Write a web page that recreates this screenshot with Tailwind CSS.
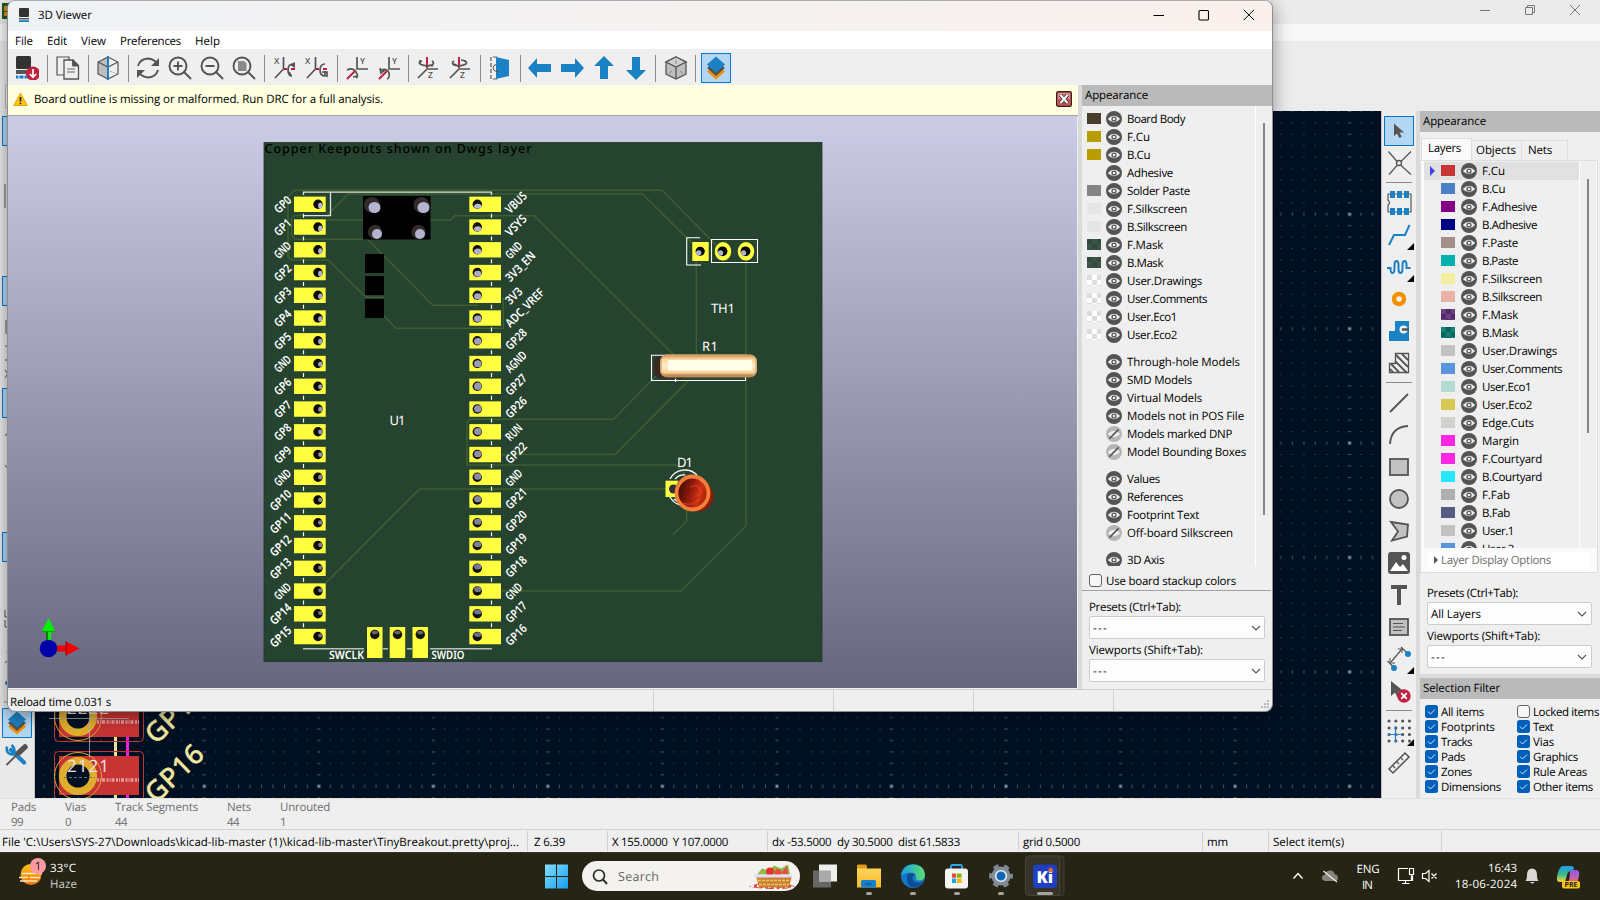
<!DOCTYPE html>
<html lang="en">
<head>
<meta charset="utf-8">
<title>3D Viewer</title>
<script src="https://cdn.jsdelivr.net/npm/@tailwindcss/browser@4"></script>
</head>
<body class="w-[1600px] h-[900px] overflow-hidden relative bg-[#efefef] font-['Open_Sans','Noto_Sans',sans-serif] text-[11.5px] leading-[18px] text-black [text-rendering:geometricPrecision] [&_[data-w]]:inline-block [&_[data-w]]:whitespace-pre [&_[data-w]]:translate-y-px">
<svg class="absolute w-0 h-0">
  <defs>
    <symbol id="eye" viewBox="0 0 16 16"><circle cx="8" cy="8" r="8" fill="#545454"/><path d="M1.800 8Q8 1.600 14.200 8Q8 14.400 1.800 8Z" fill="#efefef"/><circle cx="8" cy="8" r="2.600" fill="#545454"/><circle cx="8" cy="8" r="1.300" fill="#efefef"/></symbol>
    <symbol id="noeye" viewBox="0 0 16 16"><circle cx="8" cy="8" r="8" fill="#b6b6b6"/><path d="M1.800 8Q8 1.600 14.200 8Q8 14.400 1.800 8Z" fill="#efefef"/><path d="M3.400 12.600L12.600 3.400" stroke="#545454" stroke-width="1.500"/></symbol>
    <symbol id="chev" viewBox="0 0 10 6"><path d="M1 1L5 5L9 1" fill="none" stroke="#555" stroke-width="1.100"/></symbol>
    <symbol id="stack" viewBox="0 0 24 24"><path d="M12 8L21 15.500L12 23.500L3 15.500Z" fill="#f29100"/><path d="M12 4L21 12L12 20L3 12Z" fill="#545454"/><path d="M12 .5L21 8.500L12 16.500L3 8.500Z" fill="#1a81c4"/></symbol>
  </defs>
</svg>

<div class="flex flex-col w-[1600px] h-[900px]">
  <!-- editor title bar -->
  <header class="h-[24px] bg-[#ebebeb] flex items-center justify-end pr-[19px] gap-[33px] pb-[4px] shrink-0">
    <svg class="w-3 h-3" viewBox="0 0 12 12"><path d="M1 6.500H11" stroke="#777"/></svg>
    <svg class="w-3 h-3" viewBox="0 0 12 12"><path d="M1.500 3.500h7v7h-7zM3.500 3V1.500h7v7H9" fill="none" stroke="#777"/></svg>
    <svg class="w-3 h-3" viewBox="0 0 12 12"><path d="M1 1L11 11M11 1L1 11" stroke="#777"/></svg>
  </header>
  <div class="h-[17px] bg-[#f8f8f8] shrink-0"></div>
  <div class="h-[70px] bg-[#ececec] shrink-0"></div>

  <div class="flex h-[687px] shrink-0">
    <aside class="w-[35px] bg-[#e9e9e9] shrink-0 border-r border-[#c4c4c4]">
      <svg class="w-[34px] h-[687px]" viewBox="0 111 34 687">
        <g fill="#b3d7f2" stroke="#0078d4"><path d="M2.500 116.500h29v29h-29zM2.500 276.500h29v29h-29zM2.500 388.500h29v29h-29zM2.500 532.500h29v29h-29zM2.500 708.500h29v29h-29z"/></g>
        <g stroke="#545454" fill="none"><path d="M5 184v24M6 320v14M5 346h4M5 360h4M5 370l4 6M5 378l4-6M5 436l4-5M5 465l4 5M5 610v7h4M5 620v7h4M5 663l4-4"/></g>
        <path d="M4 702H30" stroke="#888"/>
        <circle cx="8" cy="652" r="1.500" fill="#f29100"/><circle cx="7" cy="683" r="2" fill="#1a81c4"/>
        <svg x="5" y="711" width="24" height="24"><use href="#stack"/></svg>
        <path d="M11 750L24 762.500" stroke="#1a81c4" stroke-width="4.200" stroke-linecap="round"/><path d="M7 746.500q-1 5 2 7t6-.5M14 752.500q1.500-4-2.500-7.500" stroke="#1a81c4" stroke-width="2.600" fill="none"/>
        <path d="M6.500 765L18 753.500" stroke="#545454" stroke-width="1.800"/><path d="M18.500 753L25 747" stroke="#545454" stroke-width="5.500" stroke-linecap="round"/>
      </svg>
    </aside>

    <!-- board canvas of the editor -->
    <svg class="w-[1346px] h-[687px] shrink-0 bg-[#001023]" viewBox="35 111 1346 687">
      <defs>
        <pattern id="grid" patternUnits="userSpaceOnUse" x="198.300" y="208.300" width="114.530" height="114.400">
          <g id="gridcells"></g>
        </pattern>
      </defs>
      <rect x="35" y="111" width="1346" height="687" fill="url(#grid)"/>
      <path d="M114 700h3v98h-3z" fill="#e8e29a"/><path d="M126 700h3v98h-3z" fill="#f01fe0"/>
      <g fill="#c83434"><path d="M59 700h80v37h-80zM59 756h80v39h-80z"/></g>
      <g fill="none" stroke="#c83434"><rect x="54.500" y="690" width="89" height="51.500" rx="4"/><rect x="54.500" y="751.500" width="89" height="60" rx="4"/></g>
      <g fill="#001023" stroke="#e0ae2c" stroke-width="7.500"><circle cx="78" cy="717" r="15.300"/><circle cx="78" cy="776" r="15.300"/></g>
      <g fill="none" stroke="#d9a62b"><circle cx="78" cy="717" r="23.500"/><circle cx="78" cy="776" r="23.500"/></g>
      <path d="M49 718.500H129M89.500 712V757" stroke="#aeb3ba" stroke-width=".8"/>
      <path d="M64 777.500H95" stroke="#66717c" stroke-dasharray="3 2"/>
      <g font-family="Noto Sans" fill="#f1dfe0" font-size="17"><text x="67" y="714" textLength="42">2222</text><text x="67" y="772" textLength="42">2121</text></g>
      <path d="M97 722h42M97 780h42" stroke="#e59a9a" stroke-width="3.500" stroke-dasharray="2 1 1 1 3 1.500"/>
      <g font-family="Noto Sans" fill="#f0e7a0" stroke="#f0e7a0" stroke-width=".7" font-size="27"><text transform="translate(156 804) rotate(-44)" textLength="69">GP16</text><text transform="translate(156 745) rotate(-44)" textLength="69">GP17</text></g>
    </svg>

    <!-- right toolbar -->
    <aside class="w-[35px] shrink-0 bg-[#efefef] border-l border-[#bbb]">
      <svg class="w-[34px] h-[687px]" viewBox="1382 111 34 687" fill="none" stroke="#545454" stroke-width="1.800">
        <rect x="1384.500" y="116.500" width="29" height="29" fill="#b3d7f2" stroke="#0078d4" stroke-width="1"/>
        <path d="M1394 123.500V136l3-2.500 2.500 4.500 2.200-1.200L1399.500 132.500h4.500Z" fill="#545454" stroke="none"/>
        <path d="M1388.500 151.500L1397 161.500M1411 151.500L1401 161.500M1389 174.500L1397.500 165M1411 174.500L1400.500 165" stroke-width="1.200"/><circle cx="1399" cy="163" r="2.500" stroke-width="1.300"/>
        <path d="M1386 182.500H1412M1386 382.500H1412M1386 710.500H1412" stroke="#8a8a8a" stroke-width="1"/>
        <path d="M1388 194H1411V212H1388V205q3-2 0-5Z" stroke-width="1.200"/>
        <path d="M1390 191h5v7h-5zM1397 191h5v7h-5zM1404 191h5v7h-5zM1390 208h5v7h-5zM1397 208h5v7h-5zM1404 208h5v7h-5z" fill="#1a81c4" stroke="none"/>
        <path d="M1389 245l5-10h11l4.500-10" stroke="#1a81c4" stroke-width="2"/>
        <path d="M1387 268h3.500q0 5 2 5t2-5v-3q0-4 2-4t2 4v4q0 4 2 4t2-4v-4q0-4 2-4t2 4v3h4" stroke="#1a81c4" stroke-width="2"/>
        <path d="M1414 243v7h-7zM1414 275v7h-7zM1414 667v7h-7zM1414 739v7h-7z" fill="#000" stroke="none"/>
        <circle cx="1399" cy="299" r="5" stroke="#f29100" stroke-width="4.500"/>
        <path d="M1395 321h14v20h-20v-10h6z" fill="#1a81c4" stroke="none"/><circle cx="1403.500" cy="329.500" r="4" fill="#efefef" stroke="none"/><path d="M1402 329.500H1409" stroke-width="2.500"/>
        <path d="M1395.500 353.500h13v19h-19v-9h6z" stroke-width="1.300"/><path d="M1396 355l12 12M1402 354l6 6M1395 361l12 12M1391 364l8 8M1390 369l3 3" stroke-width="1.800"/>
        <path d="M1390 412L1408 394"/><path d="M1390 444Q1391 427 1408 426"/>
        <g fill="#c2c2c2"><rect x="1390" y="459" width="18" height="16"/><circle cx="1399" cy="499" r="9"/><path d="M1391 522l17 2.500-1 12-15 4 6-9z"/><rect x="1390" y="619" width="18" height="16"/></g>
        <path d="M1393 623.500h10M1393 627h12M1393 630.500h9" stroke-width="1"/>
        <rect x="1388" y="552" width="22" height="22" rx="3" fill="#545454" stroke="none"/><path d="M1390 571l6-9 4 5 3-3 5 7zM1404 555a2.500 2.500 0 110 5 2.500 2.500 0 010-5z" fill="#fff" stroke="none"/>
        <path d="M1391 587H1407M1399 586V605" stroke-width="4"/>
        <path d="M1391 662l11-13M1387.500 661l6 6M1401 647l6 6" stroke-width="1.200"/><path d="M1390 658v5h5M1398 649h4v4" stroke-width="1"/><g fill="#1a81c4" stroke="none"><circle cx="1408" cy="654" r="3"/><circle cx="1394" cy="668" r="3"/></g>
        <path d="M1391 681v15l4-3.500 2.500 5 3-1.500-2.500-4.500h6z" fill="#545454" stroke="none"/><circle cx="1404" cy="696" r="6.700" fill="#c1203f" stroke="none"/><path d="M1401.200 693.200l5.600 5.600M1406.800 693.200l-5.600 5.600" stroke="#fff" stroke-width="1.800"/>
        <path d="M1389 721H1412M1389 728H1412M1389 734.500H1412M1389 741H1412" stroke-width="3" stroke-linecap="round" stroke-dasharray="0.100 6.700"/><path d="M1388 734.500h14M1395.500 726v16" stroke="#1a81c4" stroke-width="1.200"/>
        <path d="M1389 769l16-16 4 4-16 16z" stroke-width="1.500"/><path d="M1393 766l2 2M1397 762l2 2M1401 758l2 2" stroke-width="1.200"/>
      </svg>
    </aside>
    <div class="w-[4px] bg-[#dadada] shrink-0"></div>

    <!-- layers panel -->
    <section class="w-[180px] shrink-0 flex flex-col">
      <div class="h-[21px] bg-[#bababa] pl-[3px] leading-[20px] shrink-0"><span data-w="63">Appearance</span></div>
      <div class="h-[28px] pl-px flex items-end shrink-0 leading-[17px]">
        <div class="w-[51px] h-[22px] bg-[#fafafa] border border-b-0 border-[#ddd] pl-[6px]"><span data-w="33">Layers</span></div>
        <div class="w-[50px] h-[20px] border border-b-0 border-l-0 border-[#ddd] pl-[4px]"><span data-w="40">Objects</span></div>
        <div class="w-[46px] h-[20px] border border-b-0 border-l-0 border-[#ddd] pl-[6px]"><span data-w="24">Nets</span></div>
      </div>
      <div class="h-[413px] w-[178px] border border-[#ddd] shrink-0 bg-[#fafafa] pl-[3px] flex flex-col">
        <div class="h-[387px] w-[172px] pt-px overflow-hidden bg-[#efefef] flex">
          <div id="layers" class="w-[156px] border-r border-white"></div>
          <div class="w-[2px] h-[254px] bg-[#858585] mt-[17px] ml-[7px]"></div>
        </div>
        <div class="h-[18px] mt-[4px] ml-[4px] w-[163px] bg-white text-[#6d6d6d] flex items-center gap-[3px] pl-[6px] pb-[2px]">
          <svg class="w-[4px] h-[8px]" viewBox="0 0 4 8"><path d="M0 0L4 4L0 8Z" fill="#555"/></svg><span data-w="110">Layer Display Options</span>
        </div>
      </div>
      <div class="pl-[7px] pt-[11px] shrink-0 h-[101px]">
        <div class="h-[18px]"><span data-w="91">Presets (Ctrl+Tab):</span></div>
        <div class="w-[165px] h-[23px] border border-[#ccc] rounded-[2px] bg-[#fdfdfd] flex items-center justify-between px-[3px]"><span data-w="50">All Layers</span><svg class="w-[10px] h-[6px] mr-px"><use href="#chev"/></svg></div>
        <div class="h-[20px] pt-[2px]"><span data-w="113">Viewports (Shift+Tab):</span></div>
        <div class="w-[165px] h-[23px] border border-[#ccc] rounded-[2px] bg-[#fdfdfd] flex items-center justify-between px-[3px]"><span data-w="15">---</span><svg class="w-[10px] h-[6px] mr-px"><use href="#chev"/></svg></div>
      </div>
      <div class="h-[4px] bg-[#dadada] shrink-0"></div>
      <div class="h-[21px] bg-[#bababa] pl-[3px] leading-[20px] shrink-0"><span data-w="77">Selection Filter</span></div>
      <div id="filters" class="grid grid-cols-[92px_88px] pl-[5px] pt-[5px]"></div>
    </section>
  </div>

  <!-- editor message panel -->
  <div class="h-[31px] shrink-0 flex text-[#6e6e6e] pl-[11px] leading-[15px] border-t border-[#e2e2e2]">
    <div class="w-[54px]"><span data-w="25">Pads</span><br><span data-w="12">99</span></div>
    <div class="w-[50px]"><span data-w="21">Vias</span><br><span data-w="6">0</span></div>
    <div class="w-[112px]"><span data-w="83">Track Segments</span><br><span data-w="12">44</span></div>
    <div class="w-[53px]"><span data-w="24">Nets</span><br><span data-w="12">44</span></div>
    <div><span data-w="50">Unrouted</span><br><span data-w="6">1</span></div>
  </div>
  <div class="h-[23px] shrink-0 border-t border-[#d4d4d4] flex items-center leading-[21px]">
    <div class="w-[528px] h-[20px] pl-[2px] border-r border-[#d0d0d0]"><span data-w="517">File 'C:\Users\SYS-27\Downloads\kicad-lib-master (1)\kicad-lib-master\TinyBreakout.pretty\proj...</span></div>
    <div class="w-[80px] h-[20px] pl-[6px] border-r border-[#d0d0d0]"><span data-w="31">Z 6.39</span></div>
    <div class="w-[160px] h-[20px] pl-[4px] border-r border-[#d0d0d0] whitespace-pre"><span data-w="116">X 155.0000  Y 107.0000</span></div>
    <div class="w-[251px] h-[20px] pl-[4px] border-r border-[#d0d0d0] whitespace-pre"><span data-w="188">dx -53.5000  dy 30.5000  dist 61.5833</span></div>
    <div class="w-[184px] h-[20px] pl-[4px] border-r border-[#d0d0d0]"><span data-w="57">grid 0.5000</span></div>
    <div class="w-[66px] h-[20px] pl-[4px] border-r border-[#d0d0d0]"><span data-w="21">mm</span></div>
    <div class="w-[173px] h-[20px] pl-[4px] border-r border-[#d0d0d0]"><span data-w="71">Select item(s)</span></div>
  </div>

  <!-- taskbar -->
  <footer class="h-[48px] shrink-0 bg-[#262415] border-t border-[#3a382b] relative text-white">
    <svg class="w-[1600px] h-[47px]" viewBox="0 853 1600 47" font-family="Open Sans, Noto Sans, sans-serif" font-size="11.500">
      <defs>
        <linearGradient id="sun" x1="0" y1="0" x2="0" y2="1"><stop offset="0" stop-color="#ffc21a"/><stop offset="1" stop-color="#ee7212"/></linearGradient>
        <linearGradient id="win" x1="0" y1="0" x2="1" y2="1"><stop offset="0" stop-color="#83e0ff"/><stop offset="1" stop-color="#169bf2"/></linearGradient>
        <linearGradient id="fold" x1="0" y1="0" x2="0" y2="1"><stop offset="0" stop-color="#ffd95e"/><stop offset="1" stop-color="#f9b92d"/></linearGradient>
        <linearGradient id="edge" x1="0" y1="0" x2="1" y2="0"><stop offset="0" stop-color="#1c9de0"/><stop offset="1" stop-color="#5be070"/></linearGradient>
        <linearGradient id="cp" x1="0" y1="0" x2="0" y2="1"><stop offset="0" stop-color="#1e9cf0"/><stop offset=".5" stop-color="#35b98c"/><stop offset="1" stop-color="#f3d23a"/></linearGradient>
        <linearGradient id="cp2" x1="0" y1="0" x2="0" y2="1"><stop offset="0" stop-color="#8a5cf0"/><stop offset="1" stop-color="#f0657c"/></linearGradient>
      </defs>
      <circle cx="31" cy="874.500" r="10.500" fill="url(#sun)"/><path d="M22 873.500h14M38 873.500h4M19 877.500h9M30 877.500h10M20 881h17" stroke="#ffe9c0" stroke-width="1.500"/>
      <circle cx="38" cy="866" r="8" fill="#fb9aa3"/><text x="38" y="870" fill="#222" text-anchor="middle">1</text>
      <text x="50" y="872" fill="#fff" textLength="26">33°C</text><text x="50" y="888" fill="#ccc" textLength="27">Haze</text>
      <g transform="translate(0 -3.500)">
        <path d="M545 868h11v11.500h-11zM557 868h11v11.500h-11zM545 880.500h11v11.500h-11zM557 880.500h11v11.500h-11z" fill="url(#win)"/>
        <rect x="582" y="864.500" width="218" height="30" rx="15" fill="#f3f2ee"/>
        <circle cx="599" cy="879" r="5.500" fill="none" stroke="#2c2c2c" stroke-width="1.700"/><path d="M603 883l4 4.500" stroke="#2c2c2c" stroke-width="1.900"/>
        <text x="618" y="884" fill="#666" font-size="12.500" textLength="41">Search</text>
        <path d="M749 890q23-9 46 0q-8 3-23 2.500t-23-2.500z" fill="#e33b44"/><path d="M751 890l6-1 6 3 8-2 8 3 8-3 6 1" stroke="#fff" stroke-width="2" fill="none" stroke-dasharray="3 3"/><path d="M756 879h36l-3 12h-30z" fill="#c88236"/><path d="M758 884h32M759 888h30" stroke="#f2c25e" stroke-width="1.500" stroke-dasharray="3 1"/><path d="M757 878l5-6 7 2 5-5 7 3 7-4 2 10z" fill="#8cbd45"/><circle cx="770" cy="875" r="4" fill="#e2312d"/><circle cx="778" cy="876" r="3.500" fill="#ef4a43"/><path d="M781 877l6-8 1 9z" fill="#e54c4a"/><rect x="754" y="878" width="38" height="3" rx="1" fill="#e6dced"/>
        <rect x="813" y="874" width="18" height="17" fill="#666"/><rect x="819" y="868" width="18" height="17" fill="#efefef"/><rect x="819" y="874" width="12" height="11" fill="#aaa"/>
        <path d="M857 869h8l2 3h14v19h-24z" fill="url(#fold)"/><path d="M857 869.500q0-1.500 1.500-1.500h6.500q2 0 2 2v2h-10z" fill="#e09b1b"/><rect x="861" y="883.500" width="15" height="7.500" rx="1.500" fill="#1480cf"/><path d="M865 887.500h7" stroke="#0b5c9f" stroke-width="1.500"/>
        <circle cx="913" cy="879.500" r="12" fill="#1677c8"/><path d="M901 879q2-11 12-11q11 0 12 10q0 6-6 6q-4 0-3-3q0-5-5-5q-6 0-10 3z" fill="url(#edge)"/><path d="M907 879q3-4 8-1q-4 2-2 6q4 4 10 1q-3 6-10 6q-7-1-6-12z" fill="#0d4d96"/>
        <path d="M951 873v-3q0-1.500 1.500-1.500h8q1.500 0 1.500 1.500v3" fill="none" stroke="#2baaf0" stroke-width="1.800"/><rect x="945" y="872" width="23" height="20" rx="3" fill="#f4f4f4"/><path d="M952 877h4.200v4.200H952z" fill="#ef4b22"/><path d="M957 877h4.500v4.200H957z" fill="#7db700"/><path d="M952 882h4.200v4.500H952z" fill="#1ba3ea"/><path d="M957 882h4.500v4.500H957z" fill="#fdb600"/>
        <circle cx="1001" cy="879.500" r="10.200" fill="none" stroke="#7e8690" stroke-width="3.500" stroke-dasharray="5.300 5.380" stroke-dashoffset="2.600"/><circle cx="1001" cy="879.500" r="9.500" fill="#848c95"/><circle cx="1001" cy="879.500" r="5.300" fill="#1266b8" stroke="#e6eef5" stroke-width="1.600"/>
        <rect x="1030" y="859.500" width="34" height="39.500" rx="3" fill="#302e21" stroke="#403e33"/><rect x="1025.500" y="859.500" width="34" height="39.500" rx="3" fill="#353326" stroke="#45433a"/>
        <rect x="1033" y="868" width="24" height="23.500" rx="4" fill="#1f3fc0"/><text x="1036.500" y="886" fill="#fff" font-weight="800" font-size="16.500" textLength="16.500" lengthAdjust="spacingAndGlyphs">Ki</text><circle cx="1050.700" cy="873.500" r="2.200" fill="#f06a1d"/>
        <path d="M867.500 897h3M911.500 897h3M955.500 897h3M999.500 897h3M1038.500 897h13" stroke="#a5a49d" stroke-width="3" stroke-linecap="round"/>
      </g>
      <path d="M1293.500 878.500l4.500-5 4.500 5" fill="none" stroke="#fff" stroke-width="1.400"/>
      <path d="M1325 881q-3.500-.5-3-4 .5-2.500 3-2.500 1-4 5-4t5 4q3 0 3 3.500 0 3-3 3z" fill="#85847c"/><path d="M1323.500 871l13.500 11" stroke="#eee" stroke-width="1.300"/>
      <g fill="#fff"><text x="1356.500" y="873" textLength="23">ENG</text><text x="1362" y="889" textLength="11">IN</text><text x="1488" y="872" textLength="29">16:43</text><text x="1455" y="888" textLength="62">18-06-2024</text></g>
      <g fill="none" stroke="#fff" stroke-width="1.200"><path d="M1408 868.500h-9.500v12h14v-5M1402 883.500h7.500M1405.500 881v2.500M1409.500 868.500h4v6h-4zM1411.500 875v6"/><path d="M1422.500 873.500h3l3.500-3v11l-3.500-3h-3zM1431.500 873.500l5 5M1436.500 873.500l-5 5"/></g>
      <path d="M1525.500 881q1.500-1.500 1.500-6 0-6.500 5-6.500t5 6.500q0 4.500 1.500 6zM1530 882h4.500q-2 3-4.500 0z" fill="#d9d9d6"/>
      <path d="M1562 866h9q3 0 3 3l-3 2q-3 0-4 4l-2 7h-5q-4 0-3-5 1-8 5-11z" fill="url(#cp)"/><path d="M1570 870h7q3 1 2 6-1 7-4 7h-8q3-1 3-13z" fill="url(#cp2)"/>
      <rect x="1562" y="881" width="18" height="7.500" rx="2" fill="#f8c60b"/><text x="1564.500" y="887.300" font-size="7" font-weight="700" fill="#222" textLength="13">PRE</text>
    </svg>
  </footer>
</div>

<!-- corner of the editor icon left of the viewer -->
<svg class="absolute left-0 top-0 w-[9px] h-[120px]" viewBox="0 0 9 120"><rect x="2" y="3" width="7" height="16" fill="#1c5a22"/><path d="M4 6h3v5H4zM4 12h3v4H4z" fill="#e08b12"/><path d="M9 85H5.500v23H9" fill="#f5f5f5" stroke="#bbb"/></svg>

<!-- 3D viewer window -->
<div class="absolute left-[7px] top-0 w-[1266px] h-[712px] rounded-[8px] overflow-hidden bg-[#efefef] border border-[#8f8f8f] border-t-[#aaa] flex flex-col shadow-[0_4px_18px_rgba(0,0,0,.4)]">
  <div class="h-[30px] shrink-0 flex items-center pl-[10px] pb-[2px] bg-linear-to-r from-[#eff2f5] via-[#f5f2f1] to-[#faf0ec]">
    <svg class="w-[12px] h-[16px]" viewBox="0 0 12 16"><rect x="1" y="1" width="10" height="9" rx="1" fill="#333"/><path d="M1 11h10v1.500H1z" fill="#545454"/><path d="M1 13.200h10V15H1z" fill="#1a81c4"/></svg>
    <span class="ml-[8px]" data-w="54">3D Viewer</span>
    <div class="ml-auto flex items-center gap-[33px] pr-[17px]">
      <svg class="w-3 h-3" viewBox="0 0 12 12"><path d="M.5 6.500H11" stroke="#000"/></svg>
      <svg class="w-3 h-3" viewBox="0 0 12 12"><rect x="1" y="1.500" width="9.500" height="9.500" rx="1" fill="none" stroke="#000" stroke-width="1.100"/></svg>
      <svg class="w-3 h-3" viewBox="0 0 12 12"><path d="M.8.8L11 11M11 .8L.8 11" stroke="#000"/></svg>
    </div>
  </div>
  <nav class="h-[18px] shrink-0 bg-white flex pl-[7px] leading-[19px]">
    <div class="w-[32px]"><span data-w="18">File</span></div><div class="w-[34px]"><span data-w="20">Edit</span></div><div class="w-[39px]"><span data-w="25">View</span></div><div class="w-[75px]"><span data-w="61">Preferences</span></div><div><span data-w="25">Help</span></div>
  </nav>
  <div id="tools" class="h-[36px] shrink-0 flex items-center pl-[3px] pt-[2px] bg-[#efefef]"></div>

  <div class="flex h-[604px] shrink-0">
    <div class="w-[1070px] shrink-0 flex flex-col">
      <div class="h-[31px] bg-[#ffffe1] flex items-center pl-[5px] pr-[6px] pb-[2px] justify-between border-b border-[#a0a0a0] shrink-0">
        <div class="flex items-center gap-[6px]">
          <svg class="w-[15px] h-[15px] mt-px" viewBox="0 0 15 15"><path d="M7.500 1L14.300 13.500H.7Z" fill="#fcc419" stroke="#eda60d" stroke-width="1" stroke-linejoin="round"/><path d="M7.500 5v4.500M7.500 10.700v1.600" stroke="#222" stroke-width="1.700"/></svg>
          <span data-w="349">Board outline is missing or malformed. Run DRC for a full analysis.</span>
        </div>
        <svg class="w-4 h-4" viewBox="0 0 16 16"><rect x=".7" y=".7" width="14.600" height="14.600" rx="1.500" fill="#dd8d83" stroke="#4a1420" stroke-width="1.400"/><path d="M2 8h12v6H2z" fill="#c05a48"/><path d="M4.500 4l7 8M11.500 4l-7 8" stroke="#453040" stroke-width="4"/><path d="M4.500 4l7 8M11.500 4l-7 8" stroke="#fff" stroke-width="2"/></svg>
      </div>
      <svg id="scene" class="w-[1070px] h-[573px] shrink-0" viewBox="8 116 1070 573">
        <defs>
          <linearGradient id="bg" x1="0" y1="0" x2="0" y2="1"><stop offset="0" stop-color="#cccce6"/><stop offset="1" stop-color="#66667f"/></linearGradient>
          <linearGradient id="res" x1="0" y1="0" x2="0" y2="1"><stop offset="0" stop-color="#c98f58"/><stop offset=".22" stop-color="#ffd9a0"/><stop offset=".5" stop-color="#fff0cc"/><stop offset=".8" stop-color="#fcd096"/><stop offset="1" stop-color="#7e5127"/></linearGradient>
          <linearGradient id="led" x1="0" y1=".2" x2="1" y2=".5"><stop offset="0" stop-color="#2c0a04"/><stop offset=".45" stop-color="#8c1a0a"/><stop offset=".75" stop-color="#cf3012"/><stop offset="1" stop-color="#a32209"/></linearGradient>
        </defs>
        <rect x="8" y="116" width="1069" height="572" fill="url(#bg)"/>
        <rect x="264" y="142.500" width="558" height="519" fill="#264330" stroke="#1e3627" stroke-width=".8"/>
        <text x="264.500" y="153" font-family="Noto Sans" font-size="12.500" font-weight="500" fill="#000" textLength="267">Copper Keepouts shown on Dwgs layer</text>
        <g fill="none" stroke="#3e5f30" stroke-width="1.500">
          <path d="M384 297.300H366L328.300 260H292L288 257V197L294.500 190.300H662L716 245"/>
          <path d="M325.700 217L348 194H642.500L692 243"/>
          <path d="M384 316L396 328.300H503.300V297"/>
          <path d="M325.700 220H450.700L455 215.700H534.300L673 354"/>
          <path d="M303 215.500H295L291.500 219V235L295 239.300H367.700L432.700 305.300H477.700"/>
          <path d="M325.700 583L419.700 489H668"/>
          <path d="M688 477L676 465H467V422.700L470 419.300H613.500L657 375"/>
          <path d="M501 454.500H615L688 381"/>
          <path d="M501 591H681L746 526V260"/>
          <path d="M696.300 260V354M686.700 508V521L673 534.700"/>
        </g>
        <g fill="none" stroke="#fff" stroke-width="1.300">
          <path d="M303.500 195V192.200H491.500V195M330.500 192V215.700H303.500" stroke="#dfe3df"/>
          <path d="M303 648.800H364M383 648.800h5M407 648.800h5M430 648.800H492" stroke="#b9c1bb" stroke-width="1.600"/>
          <path d="M700 237.700H686.700V265H701M711.500 239.500H757.500V262.500H711.500ZM651.500 355.300H745.500V380.500H651.500ZM675.500 378v4" stroke-width="1.100"/>
          <path d="M670 479A17 17 0 0 1 697 475M670 497A17 17 0 0 0 680 505M675 479A12 12 0 0 1 685 475M674 499A12 12 0 0 0 680 502"/>
        </g>
        <rect x="363" y="196" width="67.500" height="43.500" fill="#000"/>
        <path d="M365 254h19v19h-19zM365 276h19v19h-19zM365 299h19v19h-19z" fill="#000"/>
        <g fill="#332c2a"><circle cx="372" cy="205" r="8"/><circle cx="421.500" cy="205" r="8"/><circle cx="375" cy="232" r="7.200"/><circle cx="418.500" cy="232" r="7.200"/></g>
        <g fill="#b4b4d0"><ellipse cx="374.500" cy="207.500" rx="6" ry="5.500"/><ellipse cx="423.500" cy="207.500" rx="6" ry="5.500"/><ellipse cx="377" cy="234" rx="5" ry="5"/><ellipse cx="420" cy="234" rx="5" ry="5"/></g>
        <g id="pads"></g>
        <g fill="#ffff40"><rect x="692.300" y="242" width="16.400" height="19"/><ellipse cx="723" cy="251.300" rx="8.200" ry="9.300"/><ellipse cx="746" cy="251.300" rx="8.200" ry="9.300"/></g>
        <g fill="#050505"><circle cx="700.200" cy="251.300" r="4.600"/><circle cx="722.500" cy="251.300" r="4.900"/><circle cx="745.500" cy="251.300" r="4.900"/></g>
        <g fill="#b0b0cc"><circle cx="698.700" cy="253" r="2.700"/><circle cx="720.500" cy="253" r="2.700"/><circle cx="743.500" cy="253" r="2.700"/></g>
        <rect x="654" y="356" width="34" height="22.500" rx="7" fill="#3a2a22"/>
        <rect x="660.300" y="354.500" width="96.500" height="22.800" rx="7" fill="url(#res)"/><rect x="668" y="360" width="84" height="10.500" rx="1.500" fill="#ffffea"/><rect x="661" y="355.500" width="95" height="21" rx="6" fill="none" stroke="#d9a066" stroke-opacity=".6" stroke-width="2"/>
        <rect x="665.500" y="480.700" width="13" height="16.300" fill="#ffff40"/><circle cx="673.500" cy="489" r="4.500" fill="#2f2f35"/>
        <circle cx="690" cy="489" r="14" fill="#1f1712"/><circle cx="698" cy="496" r="15.500" fill="#8f1c0a"/><ellipse cx="692.500" cy="493" rx="16" ry="16.500" fill="url(#led)" stroke="#f2803a" stroke-width="3.800"/><path d="M690 487q7-4 10 2t-5 7M683 503q9 4 18-5" fill="none" stroke="#e8552e" stroke-opacity=".45" stroke-width="1.500"/>
        <g font-family="Noto Sans" fill="#fff" font-size="13"><text x="389.500" y="425" textLength="16">U1</text><text x="711" y="313" textLength="24">TH1</text><text x="702" y="351" textLength="16">R1</text><text x="677" y="467" textLength="16">D1</text></g>
        <g font-family="Noto Sans" fill="#fff" font-size="11.500" font-weight="600"><text x="329" y="659" textLength="35" lengthAdjust="spacingAndGlyphs">SWCLK</text><text x="431.500" y="659" textLength="33" lengthAdjust="spacingAndGlyphs">SWDIO</text></g>
        <g id="pinnames" font-family="Noto Sans" fill="#fff" font-size="12" font-weight="600"></g>
        <path d="M46 640V631H42L48.500 618L55 631H51V642Z" fill="#00f000"/><path d="M46 640V631H48V640z" fill="#0b7d0b"/><path d="M42 631.500h13" stroke="#0a9a0a"/>
        <path d="M56 645.500H66V641.500L79.500 648.500L66 655.500V651.500H56Z" fill="#f50000"/><path d="M66 641.500V655.500" stroke="#8c0000"/><circle cx="48.500" cy="648.500" r="8.800" fill="#0000aa"/>
      </svg>
    </div>
    <div class="w-[4px] bg-[#dadada] shrink-0"></div>
    <section class="w-[190px] shrink-0 flex flex-col">
      <div class="h-[21px] bg-[#bababa] pl-[3px] leading-[20px] shrink-0"><span data-w="63">Appearance</span></div>
      <div class="h-[460px] shrink-0 overflow-hidden flex">
        <div id="viewerlayers" class="w-[174px] pt-[4px] border-r border-white"></div>
        <div class="w-[2px] h-[392px] bg-[#858585] mt-[17px] ml-[7px]"></div>
      </div>
      <div class="h-[25px] shrink-0 w-[189px] border-b border-[#a0a0a0] flex items-center pt-[5px] pl-[7px] gap-[4px]">
        <svg class="w-[13px] h-[13px]" viewBox="0 0 13 13"><rect x=".5" y=".5" width="12" height="12" rx="2.500" fill="#f6f6f6" stroke="#616161"/></svg><span data-w="130">Use board stackup colors</span>
      </div>
      <div class="pl-[7px] pt-[7px]">
        <div class="h-[18px]"><span data-w="92">Presets (Ctrl+Tab):</span></div>
        <div class="w-[176px] h-[23px] border border-[#ccc] rounded-[2px] bg-[#fdfdfd] flex items-center justify-between px-[3px]"><span data-w="15">---</span><svg class="w-[10px] h-[6px]"><use href="#chev"/></svg></div>
        <div class="h-[20px] pt-[2px]"><span data-w="114">Viewports (Shift+Tab):</span></div>
        <div class="w-[176px] h-[23px] border border-[#ccc] rounded-[2px] bg-[#fdfdfd] flex items-center justify-between px-[3px]"><span data-w="15">---</span><svg class="w-[10px] h-[6px]"><use href="#chev"/></svg></div>
      </div>
    </section>
  </div>
  <div class="h-[22px] shrink-0 border-t border-[#d0d0d0] flex leading-[23px] relative">
    <div class="w-[646px] border-r border-[#d0d0d0] pl-[2px]"><span data-w="101">Reload time 0.031 s</span></div>
    <div class="w-[180px] border-r border-[#d0d0d0]"></div>
    <div class="w-[140px] border-r border-[#d0d0d0]"></div>
    <div class="w-[140px] border-r border-[#d0d0d0]"></div>
    <svg class="ml-auto self-end w-[12px] h-[12px]" viewBox="0 0 12 12"><path d="M7 1h2v2H7zM4 4h2v2H4zM7 4h2v2H7zM1 7h2v2H1zM4 7h2v2H4zM7 7h2v2H7z" fill="#bbb"/></svg>
  </div>
</div>

<script>
const $ = id => document.getElementById(id);
const G = '#545454', R = '#c1203f', B = '#1a81c4';
const axes = (letter, lx, ly, inner) => `<g fill="none" stroke="${G}" stroke-width="1.7">${inner}</g><text x="${lx}" y="${ly}" font-size="8.5" font-weight="600" fill="${G}">${letter}</text>`;
const arrow = d => `<path d="${d}" fill="${B}"/>`;
const cube = f => `<path d="M12 1L22 6V18L12 23L2 18V6Z" fill="${f}" stroke="${G}" stroke-width="1.3"/><path d="M12 1L22 6L12 11L2 6Z" fill="#cfcfcf"/><path d="M12 1L22 6L12 11L2 6ZM12 11V23" fill="none" stroke="${G}" stroke-width="1.3"/>`;
/* a number is the width of a separator slot */
const icons = [
  `<rect x="1" y="0" width="15" height="13" rx="1.500" fill="#333"/><path d="M1 14h15v4H1z" fill="${G}"/><path d="M1 19.500h15v3H1z" fill="${B}"/><path d="M4 18v6M9 18v6" stroke="#efefef"/><circle cx="18" cy="17.500" r="7" fill="${R}"/><path d="M18 13v8M14.800 18l3.200 3.200 3.200-3.200" fill="none" stroke="#fff" stroke-width="1.700"/>`,
  9,
  `<path d="M8 19H1V1H13V4" fill="none" stroke="${G}" stroke-width="1.200"/><path d="M8 4h9l5.500 5.500V23H8z" fill="#efefef" stroke="${G}" stroke-width="1.300"/><path d="M16.500 3.500V10H23zM11 13h8M11 16h8" fill="${G}" stroke="${G}" stroke-width=".9"/>`,
  8,
  `<path d="M12 1L2 6V18L12 23Z" fill="#bdbdbd"/><path d="M12 1L22 6V18L12 23L2 18V6ZM2 6L12 11L22 6" fill="none" stroke="${G}" stroke-width="1.200"/><path d="M14 15l7 3" stroke="#aaa" stroke-dasharray="2 1"/><path d="M12 0V24" stroke="${B}" stroke-width="2"/>`,
  8,
  `<g fill="none" stroke="${G}" stroke-width="1.900"><path d="M2 10Q4 3 12 2.500Q18 3 21.500 8M22 14Q20 21 12 21.500Q6 21 2.500 16"/></g><path d="M23 2v8h-8zM1 22v-8h8z" fill="${G}"/>`,
  `<g fill="none" stroke="${G}" stroke-width="1.900"><circle cx="10" cy="10" r="8.500"/><path d="M16 16l7 7"/><path d="M5.500 10h9M10 5.500v9"/></g>`,
  `<g fill="none" stroke="${G}" stroke-width="1.900"><circle cx="10" cy="10" r="8.500"/><path d="M16 16l7 7"/><path d="M5.500 10h9"/></g>`,
  `<g fill="none" stroke="${G}" stroke-width="1.900"><circle cx="10" cy="10" r="8.500"/><path d="M16 16l7 7"/></g><path d="M6 5h6l2.500 2.500V15H6z" fill="#8a8a8a"/>`,
  9,
  axes('X', 1, 8, `<path d="M10.500 1V13L2 22"/><path d="M11 13h3M18 13h4" stroke="${R}" stroke-width="2"/><path d="M20 8q-5 0-5 6t4 6M16 16l2.500 4.500"/><path d="M17 9l5-3v6z" fill="${G}" stroke="none"/>`),
  axes('X', 0, 8, `<path d="M10.500 1V13L2 22"/><path d="M11 13h3M18 13h4" stroke="${R}" stroke-width="2"/><path d="M20 8q-5 0-5 6t5 6v-5M17 16h5v5"/>`),
  8,
  axes('Y', 15, 8, `<path d="M12 1V13H23"/><path d="M10 15L2 23" stroke="${R}" stroke-width="2"/><path d="M2 14q6-3 9 2t0 6M8 21l5-1"/>`),
  axes('Y', 15, 8, `<path d="M12 1V13H23"/><path d="M10 15L2 23" stroke="${R}" stroke-width="2"/><path d="M3 12l1 5 4-3M4 14q7-2 8 3t-2 6"/>`),
  7.4,
  axes('Z', 12, 22, `<path d="M2 22L11 13H22"/><path d="M11 1V12" stroke="${R}" stroke-width="2"/><path d="M6 5q-4 1-2 3 6 3 12 1 3-2 0-4M4 4v4M17 10l-4-1"/>`),
  axes('Z', 12, 22, `<path d="M2 22L11 13H22"/><path d="M11 1V12" stroke="${R}" stroke-width="2"/><path d="M16 5q4 1 2 3-6 3-12 1-3-2 0-4M13 4l5 1M6 8l4 2"/>`),
  8,
  `<path d="M9 1H3V23H9" fill="none" stroke="${G}" stroke-width="1.200" stroke-dasharray="4 2"/><path d="M9 8q-4 1-4 4t5 4" fill="none" stroke="${G}"/><path d="M8 1L21 4V20L8 23Z" fill="${B}"/><path d="M8 14l3 1.500-3 1z" fill="${G}"/>`,
  7.6,
  arrow('M0 12L9 2V8H23V16H9V22Z'),
  arrow('M24 12L15 2V8H1V16H15V22Z'),
  arrow('M12 0L22 10H16V23H8V10H2Z'),
  arrow('M12 24L22 14H16V1H8V14H2Z'),
  8,
  cube('#bdbdbd') + `<path d="M12 4v4M5 17l3-2M19 17l-3-2" stroke="#888"/>`,
  8,
  '*'
];
$('tools').innerHTML = icons.map(i => typeof i === 'number'
  ? `<div class="shrink-0 flex justify-center" style="width:${i}px"><div class="w-px h-[27px] bg-[#8a8a8a]"></div></div>`
  : i === '*'
  ? '<div class="w-[30px] h-[30px] ml-px shrink-0 border border-[#0078d4] bg-[#b3d7f2] flex items-center justify-center"><svg class="w-6 h-6"><use href="#stack"/></svg></div>'
  : `<div class="w-[32px] shrink-0 flex justify-center"><svg class="w-6 h-6" viewBox="0 0 24 24">${i}</svg></div>`).join('');

const check = (a, b) => `repeating-conic-gradient(${a} 0 25%, ${b} 0 50%) 0 0/10px 10px`;
const mask = check('#3d5548', '#304a3c'), clear = check('#fff', '#dcdcdc');
const vl = [['Board Body', 58, '#463e2a'], ['F.Cu', 23, '#b79e00'], ['B.Cu', 23, '#b79e00'], ['Adhesive', 46], ['Solder Paste', 63, '#848484'], ['F.Silkscreen', 60, '#e5e5e5'], ['B.Silkscreen', 60, '#e5e5e5'], ['F.Mask', 36, mask], ['B.Mask', 36, mask], ['User.Drawings', 75, clear], ['User.Comments', 80, clear], ['User.Eco1', 50, clear], ['User.Eco2', 50, clear], 0, ['Through-hole Models', 113], ['SMD Models', 65], ['Virtual Models', 75], ['Models not in POS File', 117], ['Models marked DNP', 105, , 1], ['Model Bounding Boxes', 119, , 1], 0, ['Values', 33], ['References', 56], ['Footprint Text', 72], ['Off-board Silkscreen', 106, , 1], 0, ['3D Axis', 37]];
$('viewerlayers').innerHTML = vl.map(r => r ? `<div class="h-[18px] flex items-center pl-[5px]"><div class="w-[14px] h-[11px] mb-[2px] shrink-0" style="background:${r[2] || 'transparent'}"></div><svg class="w-4 h-4 ml-[5px] mr-[5px] shrink-0"><use href="#${r[3] ? 'noeye' : 'eye'}"/></svg><span data-w="${r[1]}">${r[0]}</span></div>` : '<div class="h-[9px]"></div>').join('');

const ly = [['F.Cu', 23, '#c83434'], ['B.Cu', 23, '#4d7fc4'], ['F.Adhesive', 55, '#840084'], ['B.Adhesive', 55, '#000084'], ['F.Paste', 36, '#a39088'], ['B.Paste', 36, '#00b0ac'], ['F.Silkscreen', 60, '#f2eda1'], ['B.Silkscreen', 60, '#e8b2a7'], ['F.Mask', 36, check('#532a68', '#6f3f80')], ['B.Mask', 36, check('#02665c', '#1a7f74')], ['User.Drawings', 75, '#c2c2c2'], ['User.Comments', 80, '#5994dc'], ['User.Eco1', 49, '#b4dbd2'], ['User.Eco2', 50, '#d8c852'], ['Edge.Cuts', 52, '#d0d2cd'], ['Margin', 37, '#ff26e2'], ['F.Courtyard', 60, '#ff26e2'], ['B.Courtyard', 60, '#26e9ff'], ['F.Fab', 28, '#afafaf'], ['B.Fab', 28, '#585d84'], ['User.1', 32, '#c2c2c2'], ['User.2', 32, '#5994dc']];
$('layers').innerHTML = ly.map((r, i) => `<div class="h-[18px] flex items-center ${i ? '' : 'bg-[#e1e1e1]'}"><div class="w-[17px] pl-[6px] shrink-0 mb-px">${i ? '' : '<svg class="w-[5px] h-[10px]" viewBox="0 0 5 10"><path d="M0 0L5 5L0 10Z" fill="#4040f0"/></svg>'}</div><div class="w-[14px] h-[11px] mb-px shrink-0" style="background:${r[2]}"></div><svg class="w-4 h-4 ml-[6px] mr-[5px] shrink-0"><use href="#eye"/></svg><span data-w="${r[1]}">${r[0]}</span></div>`).join('');

const fl = [['All items', 43, 1], ['Locked items', 66, 0], ['Footprints', 54, 1], ['Text', 20, 1], ['Tracks', 31, 1], ['Vias', 21, 1], ['Pads', 24, 1], ['Graphics', 45, 1], ['Zones', 31, 1], ['Rule Areas', 54, 1], ['Dimensions', 60, 1], ['Other items', 60, 1]];
$('filters').innerHTML = fl.map(f => `<div class="h-[15px] flex items-center gap-[3px]"><svg class="w-[13px] h-[13px] shrink-0" viewBox="0 0 13 13">${f[2] ? '<rect width="13" height="13" rx="2.500" fill="#005fb8"/><path d="M3 6.500l2.500 2.500L10 4.500" fill="none" stroke="#dbe9f6"/>' : '<rect x=".5" y=".5" width="12" height="12" rx="2.500" fill="#f6f6f6" stroke="#616161"/>'}</svg><span data-w="${f[1]}">${f[0]}</span></div>`).join('');

/* pads and pin names of the module */
const L = ['GP0','GP1','GND','GP2','GP3','GP4','GP5','GND','GP6','GP7','GP8','GP9','GND','GP10','GP11','GP12','GP13','GND','GP14','GP15'];
const P = ['VBUS','VSYS','GND','3V3_EN','3V3','ADC_VREF','GP28','AGND','GP27','GP26','RUN','GP22','GND','GP21','GP20','GP19','GP18','GND','GP17','GP16'];
let pads = '', names = '';
for (let i = 0; i < 20; i++) {
  const y = 204.3 + 22.75 * i, t = i / 19;
  const c = `rgb(${185 - 75 * t},${185 - 75 * t},${212 - 80 * t})`;
  pads += `<rect x="294" y="${y - 7.700}" width="31.700" height="15.400" fill="#ffff40"/><rect x="469.300" y="${y - 7.700}" width="31.700" height="15.400" fill="#ffff40"/>`;
  pads += `<circle cx="318" cy="${y}" r="4.700" fill="#0c0c04"/><ellipse cx="320.300" cy="${y + 1.500 - 2.500 * t}" rx="2.200" ry="${3 - t}" fill="${c}"/>`;
  pads += `<circle cx="477.300" cy="${y}" r="4.700" fill="#141208"/><ellipse cx="477.800" cy="${y + (i < 8 ? 2 - i * .25 : -(i - 8) * .18)}" rx="3.700" ry="${i < 8 ? 2.500 + i * .15 : 3.700 - (i - 8) * .12}" fill="${c}"/>`;
  if (i < 19) pads += `<path d="M303.500 ${y + 9.500}v4M491.500 ${y + 9.500}v4" stroke="#fff" stroke-width="1.200"/>`;
  const w = s => s.length * 6.150;
  names += `<text text-anchor="middle" lengthAdjust="spacingAndGlyphs" textLength="${w(L[i])}" transform="translate(${(L[i].length > 3 ? 280.500 : 282.500) + 3} ${y + 3.300}) rotate(-43)">${L[i]}</text>`;
  names += `<text lengthAdjust="spacingAndGlyphs" textLength="${w(P[i])}" transform="translate(510.300 ${y + 10}) rotate(-45)">${P[i]}</text>`;
}
for (const x of [374.800, 397.500, 420.300]) pads += `<rect x="${x - 7.800}" y="627" width="15.500" height="31" fill="#ffff40"/><circle cx="${x}" cy="634.500" r="4.700" fill="#17150a"/><ellipse cx="${x}" cy="632.500" rx="3" ry="1.800" fill="#66667a"/>`;
$('pads').innerHTML = pads;
$('pinnames').innerHTML = names;

/* one major grid cell: ten by ten dots, heavier marks on the major lines */
let g = '';
for (let a = 0; a < 10; a++) for (let b = 0; b < 10; b++) {
  const w = a ? 1 : 3, h = b ? 1 : 3;
  g += `<rect x="${6 + a * 11.453 - w / 2}" y="${6 + b * 11.440 - h / 2}" width="${w}" height="${h}" fill="${a || b ? '#56616c' : '#8d949b'}"/>`;
}
$('gridcells').innerHTML = g;

/* letter spacing brings each label to its set width, again whenever fonts or styles change its size */
const spacing = new WeakMap();
const fit = e => {
  const d = (+e.dataset.w - e.getBoundingClientRect().width) / e.textContent.length;
  if (Math.abs(d) < 0.02) return;
  const s = (spacing.get(e) || 0) + d;
  spacing.set(e, s);
  e.style.letterSpacing = s.toFixed(3) + 'px';
};
const labels = [...document.querySelectorAll('[data-w]')];
const watcher = new ResizeObserver(list => list.forEach(x => fit(x.target)));
labels.forEach(e => watcher.observe(e));
addEventListener('load', () => labels.forEach(fit));
document.fonts.ready.then(() => labels.forEach(fit));
</script>
</body>
</html>
